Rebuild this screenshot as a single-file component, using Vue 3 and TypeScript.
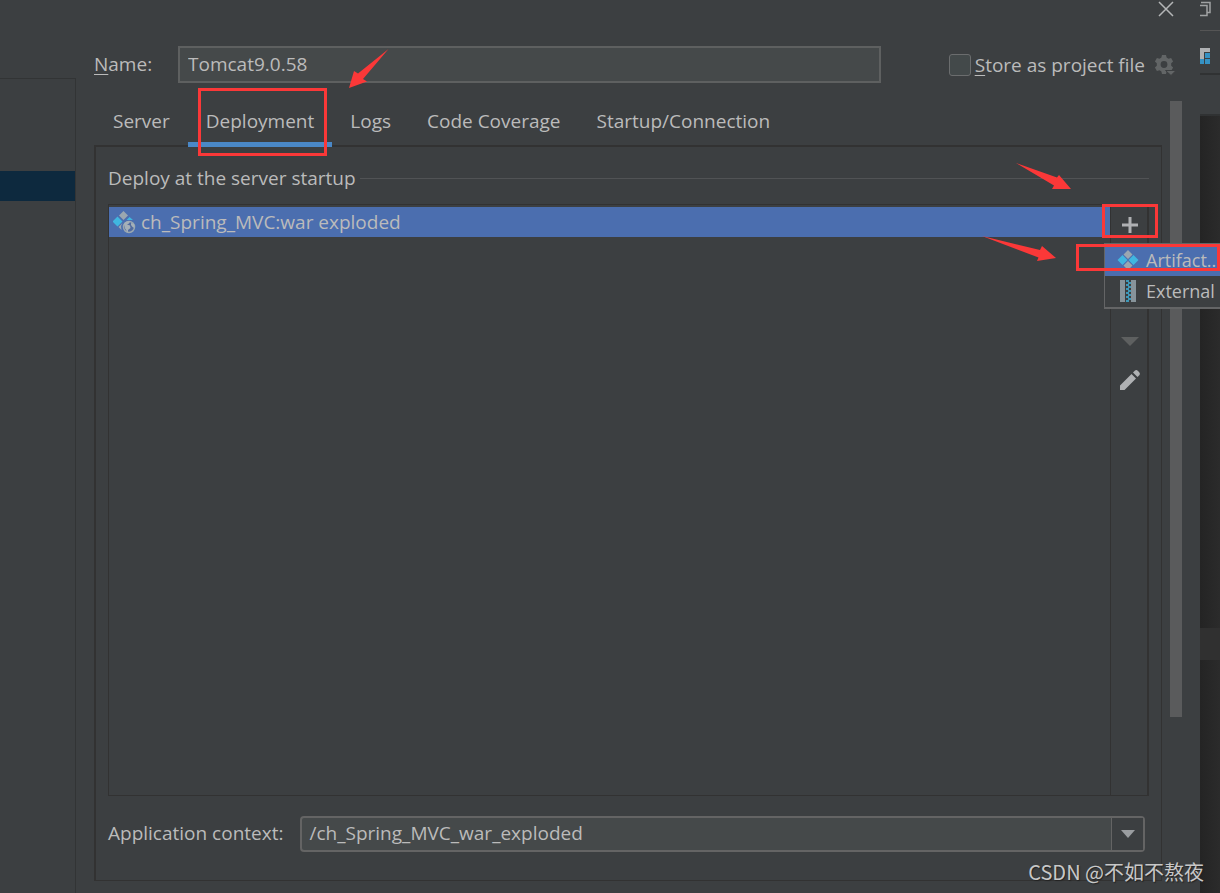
<script setup lang="ts">
import { ref } from 'vue'

const name = ref('Tomcat9.0.58')
const storeAsFile = ref(false)
const tabs: string[] = ['Server', 'Deployment', 'Logs', 'Code Coverage', 'Startup/Connection']
const activeTab = ref('Deployment')
const context = ref('/ch_Spring_MVC_war_exploded')
</script>

<template>
  <div class="screen">
    <aside class="side"><div class="tree"><div class="tree-selected"></div></div></aside>

    <main class="dialog">
      <div class="titlebar">
        <button class="icon-button" type="button" aria-label="Close">
          <svg width="16" height="16" viewBox="0 0 16 16"><path d="M1 1L15 15M15 1L1 15" stroke="#b4b6b7" stroke-width="1.5" fill="none" /></svg>
        </button>
      </div>

      <div class="name-row">
        <label class="name-label" for="config-name"><u>N</u>ame:</label>
        <input id="config-name" v-model="name" class="name-input" type="text" />
        <label class="store">
          <input v-model="storeAsFile" type="checkbox" />
          <span><u>S</u>tore as project file</span>
        </label>
        <button class="icon-button gear" type="button" aria-label="Storage options">
          <svg width="22" height="22" viewBox="0 0 22 22">
            <path fill="#626566" fill-rule="evenodd" d="M8 1h4l.6 2.600 1.900 1.100L17.100 4l2 3.400L17.200 9.300v2.400l1.900 1.900-2 3.400-2.600-.7-1.900 1.100L12 20H8l-.6-2.600-1.900-1.100L2.900 17l-2-3.400 1.900-1.900V9.300L.9 7.400l2-3.400 2.600.7 1.900-1.100zM10 7.100a3.400 3.400 0 1 0 0 6.800a3.400 3.400 0 1 0 0-6.800z" />
            <path d="M11.500 16.500h10.500l-5 5z" fill="#626566" stroke="#3c3f41" stroke-width="1" />
          </svg>
        </button>
      </div>

      <div class="body">
        <div class="content">
          <nav class="tabs" role="tablist">
            <button
              v-for="tab in tabs"
              :key="tab"
              class="tab"
              :class="{ active: tab === activeTab }"
              type="button"
              role="tab"
              :aria-selected="tab === activeTab"
              @click="activeTab = tab"
            >
              {{ tab }}
              <span v-if="tab === 'Deployment'" class="mark mark-tab"></span>
            </button>
          </nav>

          <section class="panel">
            <h2 class="heading">Deploy at the server startup</h2>
            <div class="deployments">
              <ul class="list">
                <li class="list-item">
                  <svg width="24" height="24" viewBox="0 0 24 24">
                    <path d="M10.500 1l4.500 4.500-4.500 4.500-4.500-4.500z" fill="#9aa7b0" />
                    <path d="M4.500 6.500l5 5-5 5-5-5zM16.500 7l3.500 3h-6.500z" fill="#40b6e0" />
                    <path d="M9.500 13l-1.500 3 .5 4-3-3z" fill="#9aa7b0" />
                    <circle cx="16" cy="17" r="5.500" fill="#526b9f" stroke="#9aa7b0" stroke-width="1.500" />
                    <path d="M11 14c1-2 3-3 6-2.500l-1 2-2 1 3 1 .5 2.500-2.500 2v2.500c-2-1-1.500-3-3-4zM18 13l3 1 .5 4-2-1-1.500-2z" fill="#a5b0b9" />
                  </svg>
                  ch_Spring_MVC:war exploded
                </li>
              </ul>
              <div class="tools">
                <button class="icon-button" type="button" aria-label="Add">
                  <svg width="16" height="16" viewBox="0 0 16 16"><path d="M8 0v16M0 8h16" stroke="#afb1b3" stroke-width="3" /></svg>
                </button>
                <button class="icon-button move-down" type="button" aria-label="Move down">
                  <svg width="18" height="10" viewBox="0 0 18 10"><path d="M0 0h18l-9 9z" fill="#5e6060" /></svg>
                </button>
                <button class="icon-button edit" type="button" aria-label="Edit">
                  <svg width="20" height="20" viewBox="0 0 20 20"><path d="M0 15.500L11.500 4l4.500 4.500L4.500 20H0zM13 2.500L15 .5q1.500-1 3 .5l1 1q1.500 1.500.5 3l-2 2z" fill="#afb1b3" /></svg>
                </button>
                <span class="mark mark-add"></span>
              </div>
            </div>
            <div class="context-row">
              <label for="context">Application context:</label>
              <div class="combo">
                <select id="context" v-model="context"><option>/ch_Spring_MVC_war_exploded</option></select>
                <span class="combo-arrow"><svg width="14" height="8" viewBox="0 0 14 8"><path d="M0 0h14L7 8z" fill="#9a9da0" /></svg></span>
              </div>
            </div>
          </section>
        </div>
        <div class="scroll-thumb"></div>
      </div>
    </main>

    <aside class="ide">
      <div class="ide-title">
        <svg width="12" height="18" viewBox="0 0 12 18"><path d="M0 5.500h7v10H0M1 2.500h9v10H7" fill="none" stroke="#a0a2a3" stroke-width="1.500" /></svg>
      </div>
      <div class="ide-toolbar">
        <svg width="10" height="16" viewBox="0 0 10 16"><path d="M0 0h10v4H4v7H0z" fill="#afb1b3" /><path d="M5 5h5v5H5zM5 11h5v5H5zM0 11h4v5H0z" fill="#3592c4" /></svg>
      </div>
      <div class="ide-tabs"></div>
      <div class="ide-editor"><div class="ide-line"></div></div>
    </aside>

    <div class="menu" role="menu">
      <button class="menu-item selected" type="button" role="menuitem">
        <svg width="22" height="20" viewBox="0 0 22 20"><path d="M11 0l4.500 4.500L11 9 6.500 4.500zM11 11l4.500 4.500L11 20l-4.500-4.500z" fill="#9aa7b0" /><path d="M5.500 5l5 5-5 5-5-5zM16.500 5l5 5-5 5-5-5z" fill="#40b6e0" /></svg>
        <span>Artifact..</span>
      </button>
      <button class="menu-item" type="button" role="menuitem">
        <svg width="22" height="22" viewBox="0 0 22 22"><path d="M3 0h5v22H3zM14 0h5v22h-5z" fill="#87939a" /><path d="M9 1h3M11 3h3M9 5h3M11 7h3M9 9h3M11 11h3M9 13h3M11 15h3M9 17h3M11 19h3M9 21h3" stroke="#40b6e0" stroke-width="1.500" /></svg>
        <span>External</span>
      </button>
      <span class="mark mark-menu"></span>
    </div>

    <svg class="arrow arrow-tab" width="40" height="40" viewBox="0 0 40 40"><path d="M39.500 0L14 30l4 2.500L0 39l5-17 4 2.500z" /></svg>
    <svg class="arrow arrow-add" width="56" height="27" viewBox="0 0 56 27"><path d="M0 0l41 14.500 2-2.500 12 14H36l2-3.500z" /></svg>
    <svg class="arrow arrow-menu" width="75" height="27" viewBox="0 0 75 27"><path d="M0 0l58 14 2-4 14 12-19 3 1.500-3.500z" /></svg>
    <div class="watermark">CSDN @不如不熬夜</div>
  </div>
</template>

<style>
body {
  background: #3c3f41;
}
</style>

<style scoped>
.screen {
  position: relative;
  display: flex;
  min-height: 100vh;
  overflow: hidden;
  background: #3c3f41;
  color: #bbbbbb;
  font: 19px/24px "Open Sans", "Noto Sans", sans-serif;
}
.screen *,
.screen {
  box-sizing: border-box;
}
button,
input,
select {
  font: inherit;
  color: inherit;
}
svg {
  display: block;
  flex: none;
}
.icon-button {
  display: flex;
  padding: 0;
  border: 0;
  background: none;
}
.side {
  flex: none;
  display: flex;
  width: 76px;
  padding-top: 78px;
}
.tree {
  flex: 1;
  padding-top: 92px;
  border: solid #323435;
  border-width: 1px 1px 0 0;
}
.tree-selected {
  height: 30px;
  background: #0d293e;
}
.dialog {
  flex: 1;
  min-width: 0;
  display: flex;
  flex-direction: column;
  padding: 0 18px 12px 18px;
}
.titlebar {
  display: flex;
  justify-content: flex-end;
  height: 46px;
  padding: 1px 8px 0 0;
}
.name-row {
  display: flex;
  align-items: center;
  height: 37px;
  padding-right: 6px;
}
u {
  text-underline-offset: 3px;
}
.name-label {
  width: 84px;
  padding-bottom: 2px;
}
.name-input {
  flex: 1;
  min-width: 0;
  height: 37px;
  padding: 0 8px 2px;
  border: 2px solid #5e6060;
  background: #45494a;
}
.store {
  display: flex;
  align-items: center;
  gap: 4px;
  margin-left: 68px;
  white-space: nowrap;
}
.store input {
  appearance: none;
  width: 22px;
  height: 22px;
  margin: 0;
  border: 1px solid #6b6d6e;
  border-radius: 3px;
  background: #43494a;
}
.gear {
  margin-left: 9px;
}
.body {
  flex: 1;
  display: flex;
  gap: 8px;
}
.content {
  flex: 1;
  min-width: 0;
  display: flex;
  flex-direction: column;
  padding-top: 13px;
}
.scroll-thumb {
  width: 12px;
  height: 616px;
  margin-top: 18px;
  background: #5a5b5c;
}
.tabs {
  display: flex;
  height: 51px;
  margin-bottom: -2px;
  padding-left: 1px;
}
.tab {
  position: relative;
  padding: 0 18px 2px;
  border: 0;
  background: none;
  white-space: nowrap;
}
.tab.active {
  box-shadow: inset 0 -5px #4a88c7;
}
.panel {
  flex: 1;
  display: flex;
  flex-direction: column;
  padding: 19px 12px 28px;
  border: solid #323232;
  border-width: 2px 1px 1px 2px;
}
.heading {
  display: flex;
  align-items: center;
  gap: 4px;
  margin: 0 0 14px;
  font: inherit;
}
.heading::after {
  content: "";
  flex: 1;
  height: 1px;
  background: #515355;
}
.deployments {
  flex: 1;
  display: flex;
  border: 1px solid #323232;
}
.list {
  flex: 1;
  margin: 0;
  padding: 2px 0 0;
  list-style: none;
}
.list-item {
  display: flex;
  align-items: center;
  gap: 4px;
  height: 30px;
  padding-left: 4px;
  background: #4b6eaf;
}
.tools {
  position: relative;
  display: flex;
  flex-direction: column;
  align-items: center;
  width: 38px;
  padding: 12px 0 0 2px;
  border-left: 1px solid #323232;
  border-right: 1px solid #323232;
}
.move-down {
  margin-top: 104px;
}
.edit {
  margin-top: 23px;
}
.context-row {
  display: flex;
  align-items: center;
  gap: 17px;
  margin-top: 20px;
  padding-right: 4px;
}
.context-row label {
  padding-bottom: 2px;
}
.combo {
  flex: 1;
  display: grid;
  grid-template-columns: 1fr 34px;
  height: 36px;
}
.combo select {
  grid-area: 1 / 1 / 2 / 3;
  appearance: none;
  min-width: 0;
  padding: 0 42px 2px 7px;
  border: 2px solid #646464;
  border-radius: 4px;
  background: #45494a;
}
.combo-arrow {
  grid-area: 1 / 2;
  display: flex;
  align-items: center;
  justify-content: center;
  margin: 2px 2px 2px 0;
  border-left: 1px solid #646464;
  background: #3c3f41;
  pointer-events: none;
}
.ide {
  flex: none;
  display: flex;
  flex-direction: column;
  width: 20px;
}
.ide-title {
  height: 31px;
  border-bottom: 1px solid #555555;
}
.ide-toolbar {
  height: 44px;
  padding-top: 17px;
  border-bottom: 2px solid #303233;
}
.ide-tabs {
  height: 41px;
  border-bottom: 2px solid #303233;
}
.ide-editor {
  flex: 1;
  padding-top: 512px;
  background: linear-gradient(90deg, #242424, #2b2b2b);
}
.ide-line {
  height: 32px;
  background: #303030;
}
.menu {
  position: absolute;
  top: 243px;
  right: 0;
  width: 116px;
  padding-top: 1px;
  border: solid #646566;
  border-width: 1px 0 2px 1px;
  background: #3c3f41;
  font-size: 18px;
}
.menu-item {
  display: flex;
  align-items: center;
  gap: 7px;
  width: 100%;
  height: 31px;
  padding: 0 0 2px 12px;
  border: 0;
  background: none;
  white-space: nowrap;
}
.menu-item.selected {
  background: #4b6eaf;
}
.mark {
  position: absolute;
  border: 3px solid #fb3838;
  pointer-events: none;
}
.mark-tab {
  inset: -8px 5px -9px 10px;
}
.mark-add {
  top: -1px;
  left: -9px;
  width: 56px;
  height: 34px;
}
.mark-menu {
  top: 0;
  right: 0;
  width: 144px;
  height: 27px;
}
.arrow {
  position: absolute;
  fill: #fb3838;
}
.arrow-tab {
  top: 49px;
  left: 349px;
}
.arrow-add {
  top: 163px;
  right: 148px;
}
.arrow-menu {
  top: 236px;
  right: 163px;
}
.watermark {
  position: absolute;
  right: 16px;
  bottom: 8px;
  color: #c8c8c8;
  font: 20px/26px "Noto Sans CJK SC", sans-serif;
  text-shadow: 1px 1px 1px #222222;
}
</style>
